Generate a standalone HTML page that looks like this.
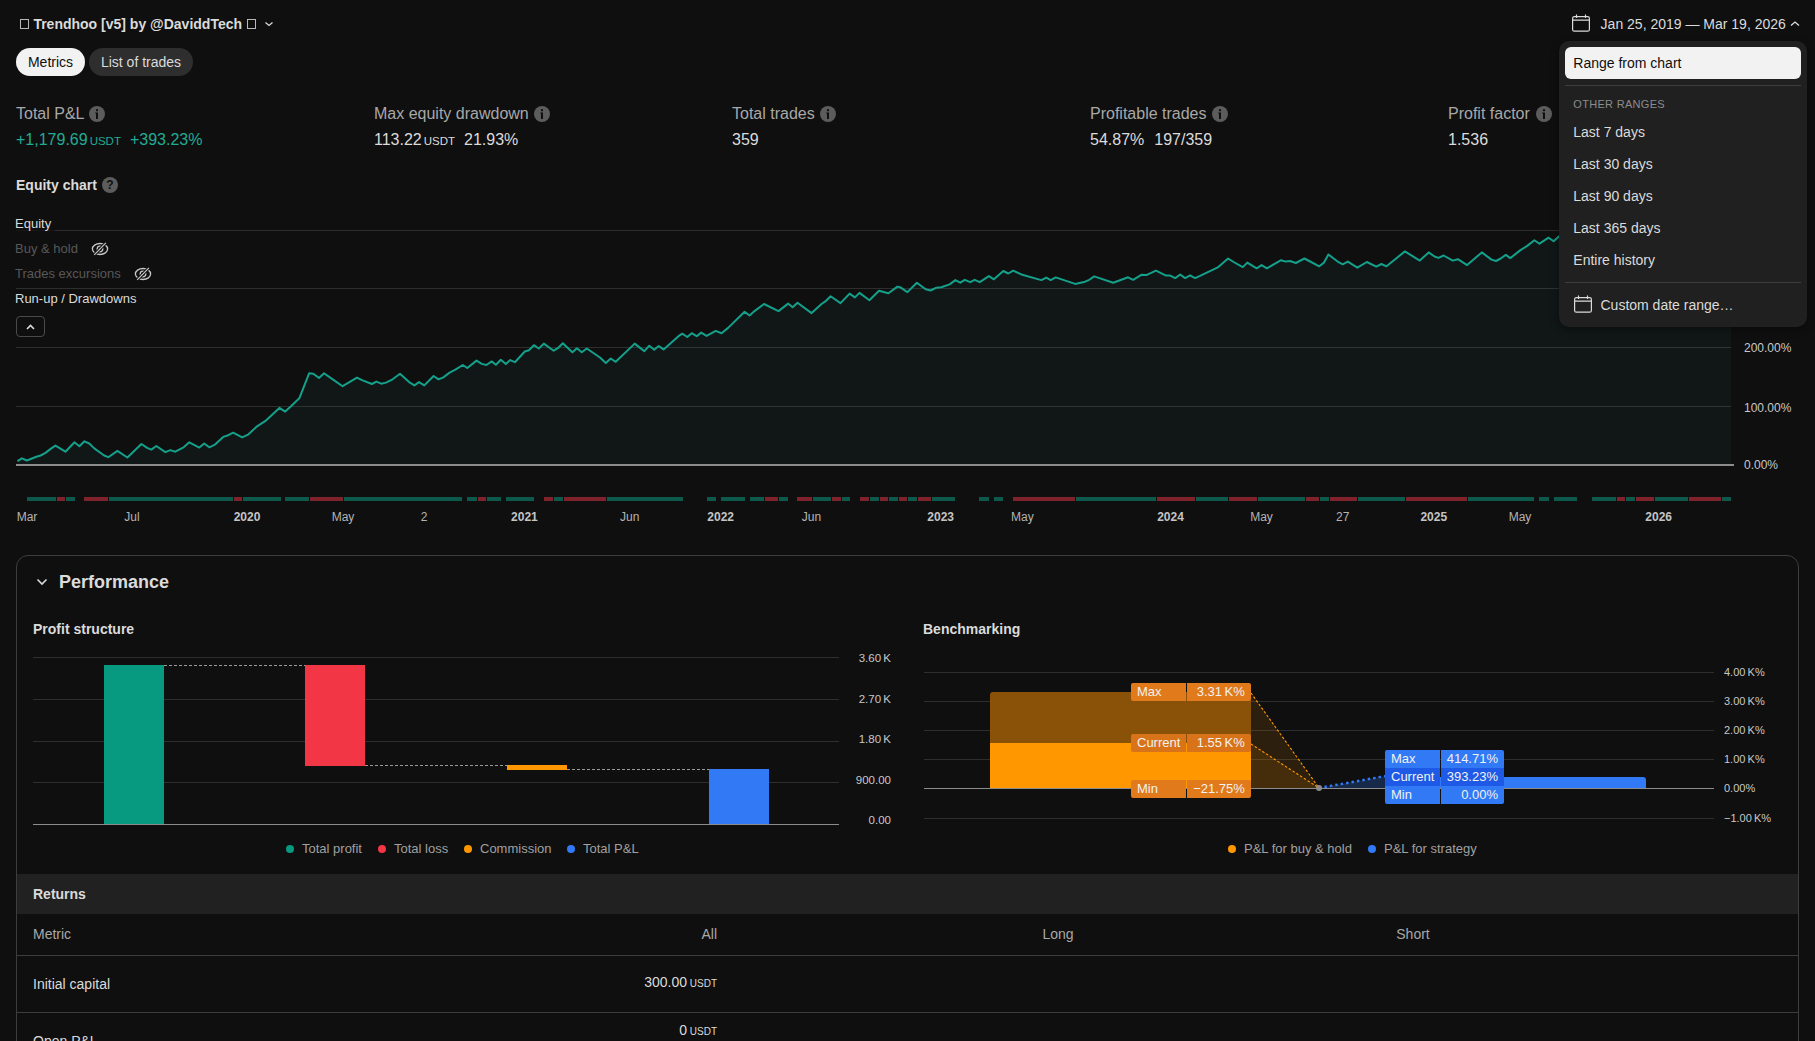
<!DOCTYPE html>
<html><head><meta charset="utf-8">
<style>
*{margin:0;padding:0;box-sizing:border-box}
html,body{width:1815px;height:1041px;overflow:hidden;background:#0f0f0f;font-family:"Liberation Sans",sans-serif;color:#dbdbdb}
.a{position:absolute;white-space:nowrap;line-height:20px}
.f11{font-size:11px}.f12{font-size:12px}.f13{font-size:13px}.f14{font-size:14px}.f16{font-size:16px}.f18{font-size:18px}
.b{font-weight:bold}
.g{color:#a8a8a8}
.tofu{display:inline-block;width:8px;height:10px;border:1px solid #c8c8c8;vertical-align:-1px}
.info{position:absolute;width:16px;height:16px;border-radius:50%;background:#5c5c5c}
.info:before{content:"";position:absolute;left:7px;top:3px;width:2px;height:2px;background:#0f0f0f;border-radius:1px}
.info:after{content:"";position:absolute;left:7px;top:7px;width:2px;height:6px;background:#0f0f0f}
.gl{position:absolute;height:1px;background:#2e2e2e}
.seg{position:absolute;top:497px;height:4px}
.sg{background:#0d5a4c}.sr{background:#80222b}
.tl{position:absolute;white-space:nowrap;line-height:20px;font-size:12px;top:507px;color:#b4b4b4;transform:translateX(-50%)}
.tl.y{font-weight:bold;color:#c4c4c4}
.usdt{font-size:11.5px}
</style></head><body>

<!-- Title -->
<div class="a" style="left:20px;top:19px;width:8.5px;height:10px;border:1px solid #b8b8b8"></div><div class="a f14 b" style="left:33.4px;top:14px">Trendhoo [v5] by @DaviddTech</div><div class="a" style="left:247px;top:19px;width:8.5px;height:10px;border:1px solid #b8b8b8"></div>
<svg class="a" style="left:264px;top:20px" width="10" height="8" viewBox="0 0 10 8"><path d="M1.5 2.5 L5 5.5 L8.5 2.5" fill="none" stroke="#dbdbdb" stroke-width="1.3"/></svg>

<!-- Pills -->
<div class="a f14" style="left:16px;top:48px;width:69px;height:28px;border-radius:14px;background:#f2f2f2;color:#0f0f0f;line-height:28px;text-align:center">Metrics</div>
<div class="a f14" style="left:89px;top:48px;width:104px;height:28px;border-radius:14px;background:#2e2e2e;color:#dbdbdb;line-height:28px;text-align:center">List of trades</div>

<!-- Metrics row -->
<div class="a f16 g" style="left:16px;top:104px">Total P&amp;L</div><svg class="a" style="left:89px;top:106px" width="16" height="16" viewBox="0 0 16 16"><circle cx="8" cy="8" r="8" fill="#5c5c5c"/><rect x="7" y="3.2" width="2" height="2" fill="#0f0f0f"/><path d="M6.2 6.6 H9 V13 H7 V7.6 H6.2 Z" fill="#0f0f0f"/></svg>
<div class="a f16" style="left:16px;top:130px;color:#22ab94">+1,179.69<span class="usdt" style="margin-left:2px">USDT</span><span style="margin-left:9px">+393.23%</span></div>

<div class="a f16 g" style="left:374px;top:104px">Max equity drawdown</div><svg class="a" style="left:534px;top:106px" width="16" height="16" viewBox="0 0 16 16"><circle cx="8" cy="8" r="8" fill="#5c5c5c"/><rect x="7" y="3.2" width="2" height="2" fill="#0f0f0f"/><path d="M6.2 6.6 H9 V13 H7 V7.6 H6.2 Z" fill="#0f0f0f"/></svg>
<div class="a f16" style="left:374px;top:130px">113.22<span class="usdt" style="margin-left:2px">USDT</span><span style="margin-left:9px">21.93%</span></div>

<div class="a f16 g" style="left:732px;top:104px">Total trades</div><svg class="a" style="left:820px;top:106px" width="16" height="16" viewBox="0 0 16 16"><circle cx="8" cy="8" r="8" fill="#5c5c5c"/><rect x="7" y="3.2" width="2" height="2" fill="#0f0f0f"/><path d="M6.2 6.6 H9 V13 H7 V7.6 H6.2 Z" fill="#0f0f0f"/></svg>
<div class="a f16" style="left:732px;top:130px">359</div>

<div class="a f16 g" style="left:1090px;top:104px">Profitable trades</div><svg class="a" style="left:1212px;top:106px" width="16" height="16" viewBox="0 0 16 16"><circle cx="8" cy="8" r="8" fill="#5c5c5c"/><rect x="7" y="3.2" width="2" height="2" fill="#0f0f0f"/><path d="M6.2 6.6 H9 V13 H7 V7.6 H6.2 Z" fill="#0f0f0f"/></svg>
<div class="a f16" style="left:1090px;top:130px">54.87%<span style="margin-left:10px">197/359</span></div>

<div class="a f16 g" style="left:1448px;top:104px">Profit factor</div><svg class="a" style="left:1536px;top:106px" width="16" height="16" viewBox="0 0 16 16"><circle cx="8" cy="8" r="8" fill="#5c5c5c"/><rect x="7" y="3.2" width="2" height="2" fill="#0f0f0f"/><path d="M6.2 6.6 H9 V13 H7 V7.6 H6.2 Z" fill="#0f0f0f"/></svg>
<div class="a f16" style="left:1448px;top:130px">1.536</div>

<!-- Equity chart heading -->
<div class="a f14 b" style="left:16px;top:175px">Equity chart</div>
<div class="a" style="left:102px;top:177px;width:16px;height:16px;border-radius:50%;background:#5c5c5c;color:#0f0f0f;font-size:12px;font-weight:bold;line-height:16px;text-align:center">?</div>

<!-- CHART -->
<div class="gl" style="left:16px;top:230px;width:1715px"></div>
<div class="gl" style="left:16px;top:288px;width:1715px"></div>
<div class="gl" style="left:16px;top:347px;width:1715px"></div>
<div class="gl" style="left:16px;top:406px;width:1715px"></div>
<svg class="a" style="left:0;top:0" width="1815" height="541" viewBox="0 0 1815 541"><path d="M16,465 L17.4,461.2 L21.9,458.3 L26.9,460.5 L36.4,456.7 L40.6,455.5 L45.5,452.9 L51.3,448.4 L55.5,445.6 L65.4,451.7 L74.5,442.3 L79.4,446.3 L84.4,441.3 L89.3,443.5 L94.3,448.4 L104.2,455.5 L108.3,457.2 L117.4,450.9 L127.4,457.5 L141.4,444.0 L147.2,447.9 L151.3,449.6 L156.3,446.0 L165.4,452.2 L170.3,450.1 L175.3,451.7 L183.6,447.3 L189.3,442.3 L199.3,447.6 L204.2,443.5 L209.2,447.3 L215.0,444.6 L223.2,436.9 L228.2,435.2 L233.1,432.7 L242.2,437.4 L248.0,434.7 L256.3,426.9 L266.2,420.3 L279.4,407.9 L285.2,411.6 L291.0,406.3 L299.3,398.3 L309.1,373.3 L313.2,373.8 L319.0,377.9 L324.0,373.3 L333.1,379.6 L342.6,386.2 L357.0,377.6 L362.0,380.1 L371.9,384.0 L376.4,381.6 L381.3,383.7 L386.0,382.6 L392.6,379.3 L400.0,373.8 L409.1,382.1 L414.4,385.4 L419.0,382.1 L424.3,385.4 L433.6,376.0 L438.5,379.3 L443.0,377.6 L449.6,372.6 L455.4,369.7 L462.8,365.0 L467.3,368.0 L476.5,360.6 L481.8,363.9 L486.4,365.0 L491.7,361.4 L495.9,364.7 L500.8,359.8 L505.8,363.9 L510.2,360.1 L514.9,362.2 L524.8,351.5 L528.9,350.2 L533.9,345.2 L538.8,348.5 L543.8,343.6 L553.7,350.7 L557.9,348.2 L562.8,343.2 L572.4,352.3 L576.9,348.2 L581.8,352.3 L586.8,348.5 L600.0,357.5 L605.8,363.0 L610.7,358.5 L615.7,361.8 L634.7,343.6 L644.3,351.1 L649.3,345.8 L654.2,349.8 L658.7,346.1 L663.6,349.4 L678.5,336.2 L682.3,333.7 L687.3,337.0 L691.7,333.2 L696.7,336.2 L701.2,332.6 L706.6,335.9 L715.7,330.9 L721.5,333.2 L728.1,327.9 L744.6,311.7 L749.6,315.5 L754.5,311.1 L764.0,304.0 L778.5,311.1 L788.1,303.6 L792.6,307.3 L797.5,302.8 L811.6,313.1 L821.5,304.0 L825.6,301.2 L830.6,296.2 L840.5,303.1 L849.6,293.6 L854.9,297.4 L859.5,292.9 L869.4,300.2 L879.0,290.7 L888.4,293.2 L897.5,286.6 L900.0,287.2 L907.4,292.1 L916.9,282.7 L925.6,289.2 L930.6,290.5 L936.4,287.7 L941.3,287.2 L949.6,284.4 L955.4,280.1 L960.3,282.7 L964.8,279.8 L970.2,282.2 L974.7,279.8 L979.7,282.2 L988.9,276.1 L993.9,279.3 L1003.3,271.0 L1008.3,273.5 L1013.2,270.7 L1022.3,274.8 L1041.3,280.1 L1046.3,277.6 L1050.7,280.1 L1055.7,277.4 L1075.2,283.9 L1085.1,281.7 L1089.3,279.8 L1094.2,276.4 L1113.2,282.7 L1128.1,277.3 L1133.1,279.8 L1141.3,274.8 L1146.3,275.1 L1155.9,270.7 L1166.1,275.6 L1170.2,275.6 L1175.2,278.1 L1180.2,274.5 L1185.1,278.1 L1190.1,275.3 L1195.0,278.1 L1200.0,275.9 L1218.3,267.1 L1228.1,258.5 L1233.6,262.0 L1242.8,267.1 L1247.3,262.6 L1256.7,268.3 L1261.6,265.1 L1266.9,268.3 L1278.5,261.6 L1281.1,260.2 L1285.6,261.6 L1290.1,261.0 L1295.8,263.0 L1304.4,258.5 L1311.1,262.0 L1319.3,266.3 L1324.0,262.6 L1328.4,254.5 L1338.6,262.2 L1342.7,264.3 L1347.8,261.6 L1357.4,267.7 L1366.8,262.0 L1376.3,266.7 L1381.4,264.0 L1386.5,266.3 L1404.9,251.4 L1419.8,260.6 L1428.7,252.4 L1434.5,256.5 L1438.5,257.9 L1443.6,255.5 L1452.8,260.6 L1457.9,259.2 L1467.1,265.1 L1481.8,252.4 L1491.5,259.6 L1496.0,261.0 L1500.7,258.5 L1505.8,254.9 L1510.3,258.1 L1520.1,250.4 L1527.2,245.9 L1534.4,240.2 L1539.5,243.7 L1548.6,237.7 L1553.7,241.2 L1558.8,236.5 L1580.0,228.0 L1620.0,222.0 L1660.0,215.0 L1700.0,208.0 L1731.0,204.0 L1731,465 Z" fill="rgba(34,171,148,0.05)"/><polyline points="17.4,461.2 21.9,458.3 26.9,460.5 36.4,456.7 40.6,455.5 45.5,452.9 51.3,448.4 55.5,445.6 65.4,451.7 74.5,442.3 79.4,446.3 84.4,441.3 89.3,443.5 94.3,448.4 104.2,455.5 108.3,457.2 117.4,450.9 127.4,457.5 141.4,444.0 147.2,447.9 151.3,449.6 156.3,446.0 165.4,452.2 170.3,450.1 175.3,451.7 183.6,447.3 189.3,442.3 199.3,447.6 204.2,443.5 209.2,447.3 215.0,444.6 223.2,436.9 228.2,435.2 233.1,432.7 242.2,437.4 248.0,434.7 256.3,426.9 266.2,420.3 279.4,407.9 285.2,411.6 291.0,406.3 299.3,398.3 309.1,373.3 313.2,373.8 319.0,377.9 324.0,373.3 333.1,379.6 342.6,386.2 357.0,377.6 362.0,380.1 371.9,384.0 376.4,381.6 381.3,383.7 386.0,382.6 392.6,379.3 400.0,373.8 409.1,382.1 414.4,385.4 419.0,382.1 424.3,385.4 433.6,376.0 438.5,379.3 443.0,377.6 449.6,372.6 455.4,369.7 462.8,365.0 467.3,368.0 476.5,360.6 481.8,363.9 486.4,365.0 491.7,361.4 495.9,364.7 500.8,359.8 505.8,363.9 510.2,360.1 514.9,362.2 524.8,351.5 528.9,350.2 533.9,345.2 538.8,348.5 543.8,343.6 553.7,350.7 557.9,348.2 562.8,343.2 572.4,352.3 576.9,348.2 581.8,352.3 586.8,348.5 600.0,357.5 605.8,363.0 610.7,358.5 615.7,361.8 634.7,343.6 644.3,351.1 649.3,345.8 654.2,349.8 658.7,346.1 663.6,349.4 678.5,336.2 682.3,333.7 687.3,337.0 691.7,333.2 696.7,336.2 701.2,332.6 706.6,335.9 715.7,330.9 721.5,333.2 728.1,327.9 744.6,311.7 749.6,315.5 754.5,311.1 764.0,304.0 778.5,311.1 788.1,303.6 792.6,307.3 797.5,302.8 811.6,313.1 821.5,304.0 825.6,301.2 830.6,296.2 840.5,303.1 849.6,293.6 854.9,297.4 859.5,292.9 869.4,300.2 879.0,290.7 888.4,293.2 897.5,286.6 900.0,287.2 907.4,292.1 916.9,282.7 925.6,289.2 930.6,290.5 936.4,287.7 941.3,287.2 949.6,284.4 955.4,280.1 960.3,282.7 964.8,279.8 970.2,282.2 974.7,279.8 979.7,282.2 988.9,276.1 993.9,279.3 1003.3,271.0 1008.3,273.5 1013.2,270.7 1022.3,274.8 1041.3,280.1 1046.3,277.6 1050.7,280.1 1055.7,277.4 1075.2,283.9 1085.1,281.7 1089.3,279.8 1094.2,276.4 1113.2,282.7 1128.1,277.3 1133.1,279.8 1141.3,274.8 1146.3,275.1 1155.9,270.7 1166.1,275.6 1170.2,275.6 1175.2,278.1 1180.2,274.5 1185.1,278.1 1190.1,275.3 1195.0,278.1 1200.0,275.9 1218.3,267.1 1228.1,258.5 1233.6,262.0 1242.8,267.1 1247.3,262.6 1256.7,268.3 1261.6,265.1 1266.9,268.3 1278.5,261.6 1281.1,260.2 1285.6,261.6 1290.1,261.0 1295.8,263.0 1304.4,258.5 1311.1,262.0 1319.3,266.3 1324.0,262.6 1328.4,254.5 1338.6,262.2 1342.7,264.3 1347.8,261.6 1357.4,267.7 1366.8,262.0 1376.3,266.7 1381.4,264.0 1386.5,266.3 1404.9,251.4 1419.8,260.6 1428.7,252.4 1434.5,256.5 1438.5,257.9 1443.6,255.5 1452.8,260.6 1457.9,259.2 1467.1,265.1 1481.8,252.4 1491.5,259.6 1496.0,261.0 1500.7,258.5 1505.8,254.9 1510.3,258.1 1520.1,250.4 1527.2,245.9 1534.4,240.2 1539.5,243.7 1548.6,237.7 1553.7,241.2 1558.8,236.5 1580.0,228.0 1620.0,222.0 1660.0,215.0 1700.0,208.0 1731.0,204.0" fill="none" stroke="#14a08a" stroke-width="2" stroke-linejoin="round"/><rect x="16" y="464" width="1718" height="2" fill="#8c8c8c"/></svg>
<div class="a f12" style="left:1744px;top:338px;color:#c8c8c8">200.00%</div>
<div class="a f12" style="left:1744px;top:397.5px;color:#c8c8c8">100.00%</div>
<div class="a f12" style="left:1744px;top:455px;color:#c8c8c8">0.00%</div>
<div class="a" style="left:10px;top:213px;width:45px;height:23px;background:rgba(15,15,15,0.7)"></div>
<div class="a f13" style="left:15px;top:214px">Equity</div>
<div class="a f13" style="left:15px;top:239px;color:#585858">Buy &amp; hold</div>
<div class="a f13" style="left:15px;top:264px;color:#585858">Trades excursions</div>
<div class="a f13" style="left:15px;top:289px">Run-up / Drawdowns</div>
<svg class="a" style="left:88.1px;top:236px" width="24" height="26" viewBox="0 0 24 26"><ellipse cx="12" cy="13" rx="7.6" ry="5.5" fill="none" stroke="#c8c8c8" stroke-width="1.3"/><circle cx="12" cy="13" r="2.8" fill="none" stroke="#c8c8c8" stroke-width="1.3"/><path d="M6.2 18.9 L17.9 6.9" stroke="#0f0f0f" stroke-width="3"/><path d="M6.2 18.9 L17.9 6.9" stroke="#c8c8c8" stroke-width="1.2"/></svg>
<svg class="a" style="left:131.1px;top:261px" width="24" height="26" viewBox="0 0 24 26"><ellipse cx="12" cy="13" rx="7.6" ry="5.5" fill="none" stroke="#c8c8c8" stroke-width="1.3"/><circle cx="12" cy="13" r="2.8" fill="none" stroke="#c8c8c8" stroke-width="1.3"/><path d="M6.2 18.9 L17.9 6.9" stroke="#0f0f0f" stroke-width="3"/><path d="M6.2 18.9 L17.9 6.9" stroke="#c8c8c8" stroke-width="1.2"/></svg>
<div class="a" style="left:16px;top:316px;width:29px;height:21px;border:1px solid #4a4a4a;border-radius:4px"></div>
<svg class="a" style="left:25px;top:323px" width="11" height="8" viewBox="0 0 11 8"><path d="M2 6 L5.5 2.5 L9 6" fill="none" stroke="#dbdbdb" stroke-width="1.6"/></svg>
<div class="seg sg" style="left:27px;width:29px"></div>
<div class="seg sr" style="left:57px;width:8px"></div>
<div class="seg sg" style="left:66px;width:9px"></div>
<div class="seg sr" style="left:84px;width:24px"></div>
<div class="seg sg" style="left:109px;width:124px"></div>
<div class="seg sr" style="left:234px;width:8px"></div>
<div class="seg sg" style="left:243px;width:38px"></div>
<div class="seg sg" style="left:285px;width:24px"></div>
<div class="seg sr" style="left:310px;width:33px"></div>
<div class="seg sg" style="left:344px;width:118px"></div>
<div class="seg sg" style="left:467px;width:10px"></div>
<div class="seg sr" style="left:478px;width:8px"></div>
<div class="seg sg" style="left:487px;width:14px"></div>
<div class="seg sg" style="left:506px;width:28px"></div>
<div class="seg sr" style="left:544px;width:9px"></div>
<div class="seg sg" style="left:554px;width:9px"></div>
<div class="seg sr" style="left:564px;width:42px"></div>
<div class="seg sg" style="left:607px;width:76px"></div>
<div class="seg sg" style="left:707px;width:9px"></div>
<div class="seg sg" style="left:721px;width:24px"></div>
<div class="seg sg" style="left:750px;width:14px"></div>
<div class="seg sr" style="left:765px;width:13px"></div>
<div class="seg sg" style="left:779px;width:9px"></div>
<div class="seg sr" style="left:797px;width:15px"></div>
<div class="seg sg" style="left:813px;width:18px"></div>
<div class="seg sr" style="left:832px;width:9px"></div>
<div class="seg sg" style="left:842px;width:8px"></div>
<div class="seg sr" style="left:860px;width:9px"></div>
<div class="seg sg" style="left:870px;width:9px"></div>
<div class="seg sr" style="left:880px;width:8px"></div>
<div class="seg sg" style="left:889px;width:9px"></div>
<div class="seg sr" style="left:899px;width:8px"></div>
<div class="seg sg" style="left:908px;width:9px"></div>
<div class="seg sr" style="left:918px;width:13px"></div>
<div class="seg sg" style="left:932px;width:23px"></div>
<div class="seg sg" style="left:979px;width:10px"></div>
<div class="seg sg" style="left:994px;width:9px"></div>
<div class="seg sr" style="left:1013px;width:62px"></div>
<div class="seg sg" style="left:1076px;width:80px"></div>
<div class="seg sr" style="left:1157px;width:38px"></div>
<div class="seg sg" style="left:1196px;width:32px"></div>
<div class="seg sr" style="left:1229px;width:28px"></div>
<div class="seg sg" style="left:1258px;width:47px"></div>
<div class="seg sr" style="left:1306px;width:13px"></div>
<div class="seg sg" style="left:1320px;width:9px"></div>
<div class="seg sr" style="left:1330px;width:27px"></div>
<div class="seg sg" style="left:1358px;width:47px"></div>
<div class="seg sr" style="left:1406px;width:61px"></div>
<div class="seg sg" style="left:1468px;width:66px"></div>
<div class="seg sg" style="left:1539px;width:10px"></div>
<div class="seg sg" style="left:1554px;width:23px"></div>
<div class="seg sg" style="left:1592px;width:24px"></div>
<div class="seg sr" style="left:1617px;width:8px"></div>
<div class="seg sg" style="left:1626px;width:9px"></div>
<div class="seg sr" style="left:1636px;width:18px"></div>
<div class="seg sg" style="left:1655px;width:33px"></div>
<div class="seg sr" style="left:1689px;width:32px"></div>
<div class="seg sg" style="left:1722px;width:9px"></div>
<div class="tl" style="left:27px">Mar</div>
<div class="tl" style="left:132px">Jul</div>
<div class="tl y" style="left:247px">2020</div>
<div class="tl" style="left:343px">May</div>
<div class="tl" style="left:424px">2</div>
<div class="tl y" style="left:524.4px">2021</div>
<div class="tl" style="left:629.8px">Jun</div>
<div class="tl y" style="left:720.7px">2022</div>
<div class="tl" style="left:811.4px">Jun</div>
<div class="tl y" style="left:940.7px">2023</div>
<div class="tl" style="left:1022.4px">May</div>
<div class="tl y" style="left:1170.5px">2024</div>
<div class="tl" style="left:1261.5px">May</div>
<div class="tl" style="left:1342.8px">27</div>
<div class="tl y" style="left:1433.8px">2025</div>
<div class="tl" style="left:1520px">May</div>
<div class="tl y" style="left:1658.7px">2026</div>

<!-- Performance card -->
<div class="a" style="left:16px;top:555px;width:1783px;height:600px;border:1px solid #3d3d3d;border-radius:12px"></div>
<svg class="a" style="left:35px;top:576px" width="14" height="12" viewBox="0 0 14 12"><path d="M2.5 3.5 L7 8 L11.5 3.5" fill="none" stroke="#dbdbdb" stroke-width="1.6"/></svg>
<div class="a f18 b" style="left:59px;top:572px">Performance</div>

<!-- Profit structure -->
<div class="a f14 b" style="left:33px;top:619px">Profit structure</div>
<div class="gl" style="left:33px;top:657px;width:806px"></div>
<div class="gl" style="left:33px;top:699px;width:806px"></div>
<div class="gl" style="left:33px;top:741px;width:806px"></div>
<div class="gl" style="left:33px;top:782px;width:806px"></div>
<div class="a" style="left:104px;top:665px;width:60px;height:159px;background:#089981"></div>
<div class="a" style="left:305px;top:665px;width:60px;height:101px;background:#f23645"></div>
<div class="a" style="left:507px;top:765px;width:60px;height:5px;background:#ff9800"></div>
<div class="a" style="left:709px;top:769px;width:60px;height:55px;background:#3179f5"></div>
<svg class="a" style="left:0;top:0" width="900" height="900" viewBox="0 0 900 900">
<path d="M164 665.5 H305 M365 765.5 H507 M567 769.5 H709" stroke="#9a9a9a" stroke-width="1" stroke-dasharray="3 2" fill="none"/>
<rect x="33" y="824" width="806" height="1" fill="#8c8c8c"/>
</svg>
<div class="a" style="font-size:11.5px;right:924px;top:647.5px;color:#c8c8c8">3.60&thinsp;K</div>
<div class="a" style="font-size:11.5px;right:924px;top:688.5px;color:#c8c8c8">2.70&thinsp;K</div>
<div class="a" style="font-size:11.5px;right:924px;top:728.5px;color:#c8c8c8">1.80&thinsp;K</div>
<div class="a" style="font-size:11.5px;right:924px;top:769.5px;color:#c8c8c8">900.00</div>
<div class="a" style="font-size:11.5px;right:924px;top:809.5px;color:#c8c8c8">0.00</div>
<div class="a" style="left:286px;top:845px;width:8px;height:8px;border-radius:50%;background:#089981"></div>
<div class="a f13" style="left:302px;top:839px;color:#a0a0a0">Total profit</div>
<div class="a" style="left:378px;top:845px;width:8px;height:8px;border-radius:50%;background:#f23645"></div>
<div class="a f13" style="left:394px;top:839px;color:#a0a0a0">Total loss</div>
<div class="a" style="left:464px;top:845px;width:8px;height:8px;border-radius:50%;background:#ff9800"></div>
<div class="a f13" style="left:480px;top:839px;color:#a0a0a0">Commission</div>
<div class="a" style="left:567px;top:845px;width:8px;height:8px;border-radius:50%;background:#3179f5"></div>
<div class="a f13" style="left:583px;top:839px;color:#a0a0a0">Total P&amp;L</div>

<!-- Benchmarking -->
<div class="a f14 b" style="left:923px;top:619px">Benchmarking</div>
<div class="gl" style="left:924px;top:672px;width:790px"></div>
<div class="gl" style="left:924px;top:701px;width:790px"></div>
<div class="gl" style="left:924px;top:730px;width:790px"></div>
<div class="gl" style="left:924px;top:759px;width:790px"></div>
<div class="gl" style="left:924px;top:818px;width:790px"></div>
<div class="a f11" style="left:1724px;top:662px;color:#c8c8c8">4.00&thinsp;K%</div>
<div class="a f11" style="left:1724px;top:691px;color:#c8c8c8">3.00&thinsp;K%</div>
<div class="a f11" style="left:1724px;top:720px;color:#c8c8c8">2.00&thinsp;K%</div>
<div class="a f11" style="left:1724px;top:749px;color:#c8c8c8">1.00&thinsp;K%</div>
<div class="a f11" style="left:1724px;top:778px;color:#c8c8c8">0.00%</div>
<div class="a f11" style="left:1724px;top:808px;color:#c8c8c8">−1.00&thinsp;K%</div>
<svg class="a" style="left:0;top:0" width="1815" height="900" viewBox="0 0 1815 900">
<path d="M990 788 V695 Q990 692 993 692 H1251 V788 Z" fill="#8a5208"/>
<rect x="990" y="743" width="261" height="45" fill="#ff9800"/>
<path d="M1251 692 L1319 788 L1251 788 Z" fill="rgba(255,152,0,0.12)"/>
<path d="M1251 743 L1319 788 L1251 788 Z" fill="rgba(255,152,0,0.12)"/>
<path d="M1251 693 L1319 788 M1251 744 L1319 788" stroke="#ff9800" stroke-width="1.1" stroke-dasharray="2.5 2" fill="none"/>
<path d="M1319 788 L1386 776 L1386 788 Z" fill="rgba(49,121,245,0.25)"/>
<path d="M1319 788 L1386 776" stroke="#3179f5" stroke-width="2.5" stroke-dasharray="2.5 3" fill="none"/>
<path d="M1386 788 V777 H1643 Q1646 777 1646 780 V788 Z" fill="#3179f5"/>
<rect x="924" y="788" width="790" height="1" fill="#8c8c8c"/>
<circle cx="1319" cy="788" r="3" fill="#8c8c8c"/>
</svg>
<!-- orange labels -->
<div class="a f13" style="left:1131px;top:683px;width:55px;height:18px;background:#e07a1a;border-radius:2px 0 0 2px;line-height:17.5px;padding-left:6px;color:#f2f2f2">Max</div>
<div class="a f13" style="left:1187px;top:683px;width:64px;height:18px;background:#e07a1a;border-radius:0 2px 2px 0;line-height:17.5px;text-align:right;padding-right:6.2px;color:#f2f2f2">3.31&thinsp;K%</div>
<div class="a f13" style="left:1131px;top:734px;width:55px;height:18px;background:#d9731a;border-radius:2px 0 0 2px;line-height:17.5px;padding-left:6px;color:#f2f2f2">Current</div>
<div class="a f13" style="left:1187px;top:734px;width:64px;height:18px;background:#d9731a;border-radius:0 2px 2px 0;line-height:17.5px;text-align:right;padding-right:6.2px;color:#f2f2f2">1.55&thinsp;K%</div>
<div class="a f13" style="left:1131px;top:780px;width:55px;height:18px;background:#e07a1a;border-radius:2px 0 0 2px;line-height:17.5px;padding-left:6px;color:#f2f2f2">Min</div>
<div class="a f13" style="left:1187px;top:780px;width:64px;height:18px;background:#e07a1a;border-radius:0 2px 2px 0;line-height:17.5px;text-align:right;padding-right:6.2px;color:#f2f2f2">−21.75%</div>
<!-- blue labels -->
<div class="a f13" style="left:1385px;top:750px;width:55px;height:18px;background:#3179f5;border-radius:2px 0 0 0;line-height:18px;padding-left:6px;color:#f2f2f2">Max</div>
<div class="a f13" style="left:1441px;top:750px;width:63px;height:18px;background:#3179f5;border-radius:0 2px 0 0;line-height:18px;text-align:right;padding-right:6px;color:#f2f2f2">414.71%</div>
<div class="a f13" style="left:1385px;top:768px;width:55px;height:18px;background:#1f5ae6;line-height:18px;padding-left:6px;color:#f2f2f2">Current</div>
<div class="a f13" style="left:1441px;top:768px;width:63px;height:18px;background:#1f5ae6;line-height:18px;text-align:right;padding-right:6px;color:#f2f2f2">393.23%</div>
<div class="a f13" style="left:1385px;top:786px;width:55px;height:18px;background:#3179f5;border-radius:0 0 0 2px;line-height:18px;padding-left:6px;color:#f2f2f2">Min</div>
<div class="a f13" style="left:1441px;top:786px;width:63px;height:18px;background:#3179f5;border-radius:0 0 2px 0;line-height:18px;text-align:right;padding-right:6px;color:#f2f2f2">0.00%</div>
<div class="a" style="left:1228px;top:845px;width:8px;height:8px;border-radius:50%;background:#ff9800"></div>
<div class="a f13" style="left:1244px;top:839px;color:#a0a0a0">P&amp;L for buy &amp; hold</div>
<div class="a" style="left:1368px;top:845px;width:8px;height:8px;border-radius:50%;background:#3179f5"></div>
<div class="a f13" style="left:1384px;top:839px;color:#a0a0a0">P&amp;L for strategy</div>

<!-- Returns -->
<div class="a" style="left:17px;top:874px;width:1781px;height:40px;background:#212121"></div>
<div class="a f14 b" style="left:33px;top:884px">Returns</div>
<div class="a f14 g" style="left:33px;top:924px">Metric</div>
<div class="a f14 g" style="right:1098px;top:924px">All</div>
<div class="a f14 g" style="left:1058px;top:924px;transform:translateX(-50%)">Long</div>
<div class="a f14 g" style="left:1413px;top:924px;transform:translateX(-50%)">Short</div>
<div class="a" style="left:17px;top:955px;width:1781px;height:1px;background:#3d3d3d"></div>
<div class="a f14" style="left:33px;top:974px">Initial capital</div>
<div class="a f14" style="right:1098px;top:972px">300.00<span style="font-size:10px;margin-left:2.8px">USDT</span></div>
<div class="a" style="left:17px;top:1012px;width:1781px;height:1px;background:#3d3d3d"></div>
<div class="a f14" style="left:33px;top:1031px">Open P&amp;L</div>
<div class="a f14" style="right:1098px;top:1020px">0<span style="font-size:10px;margin-left:2.8px">USDT</span></div>



<!-- Date range -->
<svg class="a" style="left:1571px;top:14px" width="20" height="19" viewBox="0 0 20 19"><rect x="1.6" y="2.6" width="16.8" height="14.6" rx="1.8" fill="none" stroke="#dbdbdb" stroke-width="1.2"/><path d="M1.6 6.2 H18.4 M5.5 0.5 V4 M14.5 0.5 V4" stroke="#dbdbdb" stroke-width="1.2" fill="none"/></svg>
<div class="a f14" style="left:1600.6px;top:14px">Jan 25, 2019 — Mar 19, 2026</div>
<svg class="a" style="left:1789px;top:19px" width="12" height="10" viewBox="0 0 12 10"><path d="M2 6.5 L6 3 L10 6.5" fill="none" stroke="#dbdbdb" stroke-width="1.3"/></svg>

<!-- Dropdown -->
<div class="a" style="left:1559px;top:41px;width:248px;height:286px;background:#202020;border-radius:10px;box-shadow:0 2px 8px rgba(0,0,0,0.4)"></div>
<div class="a f14" style="left:1565px;top:47px;width:236px;height:32px;background:#f2f2f2;border-radius:6px;color:#0f0f0f;line-height:32px;padding-left:8.3px">Range from chart</div>
<div class="a" style="left:1565px;top:85px;width:236px;height:1px;background:#3d3d3d"></div>
<div class="a f11" style="left:1573.3px;top:94px;color:#8c8c8c;letter-spacing:0.3px">OTHER RANGES</div>
<div class="a f14" style="left:1573.3px;top:122px">Last 7 days</div>
<div class="a f14" style="left:1573.3px;top:154px">Last 30 days</div>
<div class="a f14" style="left:1573.3px;top:186px">Last 90 days</div>
<div class="a f14" style="left:1573.3px;top:218px">Last 365 days</div>
<div class="a f14" style="left:1573.3px;top:250px">Entire history</div>
<div class="a" style="left:1565px;top:282px;width:236px;height:1px;background:#3d3d3d"></div>
<svg class="a" style="left:1573px;top:295px" width="20" height="19" viewBox="0 0 20 19"><rect x="1.6" y="2.6" width="16.8" height="14.6" rx="1.8" fill="none" stroke="#dbdbdb" stroke-width="1.2"/><path d="M1.6 6.2 H18.4 M5.5 0.5 V4 M14.5 0.5 V4" stroke="#dbdbdb" stroke-width="1.2" fill="none"/></svg>
<div class="a f14" style="left:1600.5px;top:295px">Custom date range…</div>

</body></html>
